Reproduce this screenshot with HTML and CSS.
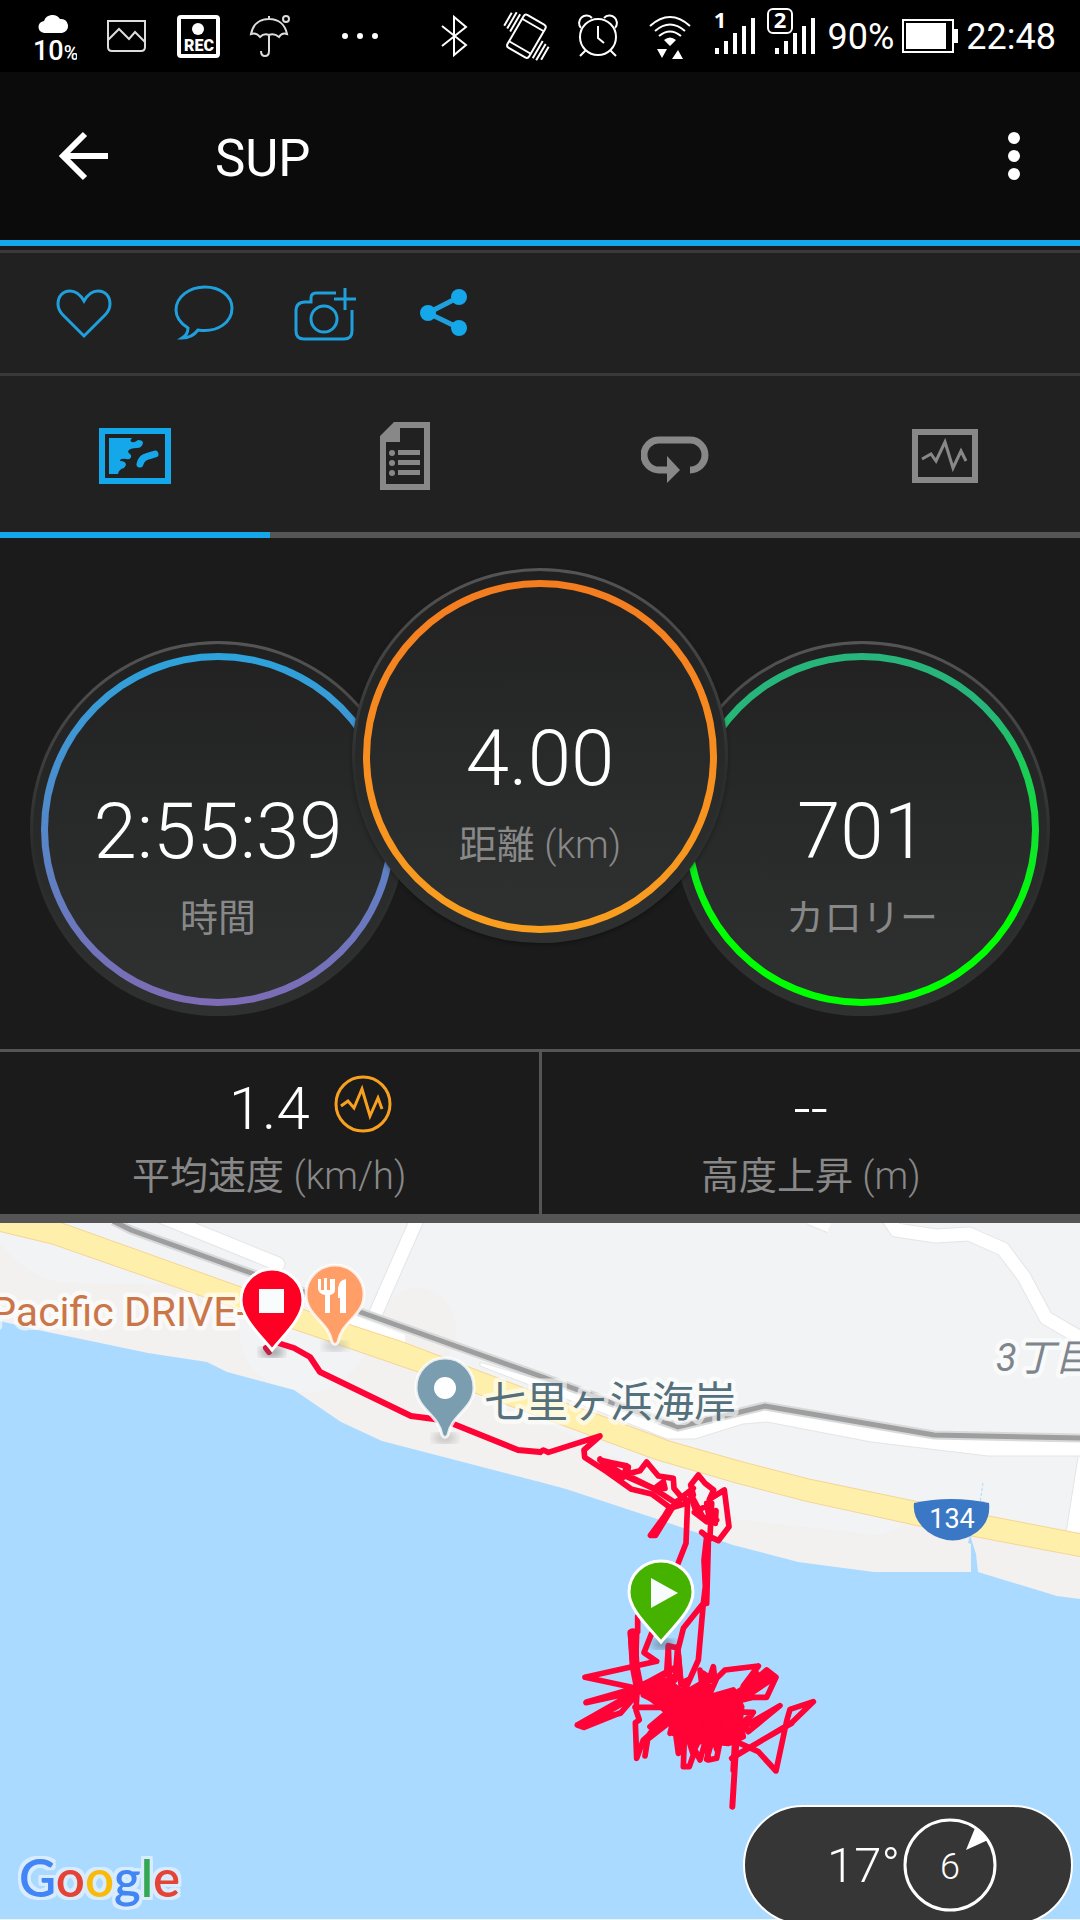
FILE: index.html
```html
<!DOCTYPE html>
<html lang="ja">
<head>
    <meta charset="UTF-8">
    <meta name="viewport" content="width=device-width, initial-scale=1.0">
    <title>SUP</title>
    <link rel="stylesheet" href="styles.css">
</head>
<body>

    <!-- Status Bar -->
    <div class="status-bar">
        <div class="status-icons">
            <svg width="44" height="72" viewBox="0 0 44 72" fill="#fff">
                <path d="M12 33a6 6 0 0 1-1-12 9 9 0 0 1 16-2 7 7 0 0 1 2 14z"/>
                <text class="rain-text" x="0" y="60">10<tspan class="rain-unit">%</tspan></text>
            </svg>
            <svg width="44" height="72" viewBox="0 0 44 72" fill="none" stroke="#ddd" stroke-width="2">
                <path d="M3 21h37v26q0 4-4 4H7q-4 0-4-4zM3 40l11-11 10 10 6-7 10 10"/>
            </svg>
            <svg width="44" height="72" viewBox="0 0 44 72">
                <rect x="2" y="17" width="39" height="39" rx="2" fill="none" stroke="#fff" stroke-width="4"/>
                <circle cx="21" cy="29" r="6" fill="#fff"/>
                <text class="rec-text" x="22" y="51">REC</text>
            </svg>
            <svg width="44" height="72" viewBox="0 0 44 72" fill="none" stroke="#ddd" stroke-width="2">
                <path d="M20 16v3M2 34C4 24 11 19 20 19s16 5 18 15q-5-2-8 3-5-4-10-2-5-2-9 2-4-5-9-3zM20 35v16q0 5-4 5t-4-5"/>
                <circle cx="37" cy="19" r="3"/>
            </svg>
            <svg width="76" height="72" viewBox="0 0 76 72" fill="#fff">
                <circle cx="24" cy="36" r="3"/>
                <circle cx="39" cy="36" r="3"/>
                <circle cx="54" cy="36" r="3"/>
            </svg>
        </div>
        <div class="status-system">
            <div class="status-icons">
                <svg width="44" height="72" viewBox="0 0 44 72" fill="none" stroke="#fff" stroke-width="2">
                    <path d="M10 26l24 19-12 10V17l12 10-24 19"/>
                </svg>
                <svg class="wide-icon" width="44" height="72" viewBox="0 0 44 72" fill="none" stroke="#fff" stroke-width="2">
                    <g transform="rotate(30 22 36)">
                        <rect x="10" y="17" width="25" height="38" rx="3"/>
                        <path d="M10 23h25M10 49h25M6 20v20M2 20v19M-2 23v15M39 32v20M43 33v19M47 34v15"/>
                    </g>
                </svg>
                <svg width="44" height="72" viewBox="0 0 44 72" fill="none" stroke="#fff" stroke-width="2">
                    <circle cx="22" cy="37" r="18"/>
                    <path d="M22 26v12l6 5M10 50l-6 6M34 50l6 6M5 28a7 7 0 1 1 11-10M39 28a7 7 0 1 0-11-10"/>
                </svg>
                <svg width="44" height="72" viewBox="0 0 44 72" fill="none" stroke="#fff" stroke-width="2">
                    <path d="M2 26q20-18 40 0M7 31q15-13 30 0M11 36q11-9 22 0"/>
                    <path d="M16 40q6-5 12 0l-6 6zM9 49h10l-5 9zM24 59h11l-5-9z" fill="#fff" stroke="none"/>
                </svg>
            </div>
            <svg width="46" height="72" viewBox="0 0 46 72" fill="#fff">
                <path d="M3 48h4v6H3zM12 41h4v13h-4zM21 33h4v21h-4zM30 26h4v28h-4zM39 18h4v36h-4z"/>
                <text class="sim-text" x="8" y="28">1</text>
            </svg>
            <svg width="54" height="72" viewBox="0 0 54 72" fill="#fff">
                <path d="M9 48h4v6H9zM18 41h4v13h-4zM27 33h4v21h-4zM36 26h4v28h-4zM45 18h4v36h-4z"/>
                <rect x="2" y="9" width="24" height="24" rx="5" fill="#000" stroke="#fff" stroke-width="2"/>
                <text class="sim-text" x="14" y="28">2</text>
            </svg>
            <span>90%</span>
            <svg width="56" height="72" viewBox="0 0 56 72">
                <path d="M1 20h50v32H1zM52 30h4v12h-4z" fill="none" stroke="#fff" stroke-width="2"/>
                <path d="M4 23h40v26H4zM52 30h4v12h-4z" fill="#fff"/>
            </svg>
            <span>22:48</span>
        </div>
    </div>

    <!-- App Bar -->
    <header class="app-bar">
        <button class="icon-btn" aria-label="戻る">
            <svg width="72" height="72" viewBox="0 0 72 72" fill="none" stroke="#fff" stroke-width="6">
                <path d="M60 36H16M37 14L15 36l22 22"/>
            </svg>
        </button>
        <h1>SUP</h1>
        <button class="icon-btn" aria-label="メニュー">
            <svg width="72" height="72" viewBox="0 0 72 72" fill="#fff">
                <circle cx="36" cy="18" r="6"/>
                <circle cx="36" cy="36" r="6"/>
                <circle cx="36" cy="54" r="6"/>
            </svg>
        </button>
    </header>

    <!-- Social Actions -->
    <div class="actions">
        <button class="icon-btn" aria-label="いいね">
            <svg width="72" height="72" viewBox="0 0 72 72" fill="none" stroke="#1f9fdc" stroke-width="3">
                <path d="M36 24C32 17 27 14 22 14c-7 0-12 5-12 13 0 4 2 8 5 11l21 21 21-21c3-3 5-7 5-11 0-8-5-13-12-13-5 0-10 3-14 10z"/>
            </svg>
        </button>
        <button class="icon-btn" aria-label="コメント">
            <svg width="72" height="72" viewBox="0 0 72 72" fill="none" stroke="#1f9fdc" stroke-width="3">
                <path d="M30 53C50 56 64 45 64 31 64 19 52 10 37 10 21 10 8 20 8 33c0 8 4 13 12 18 0 6-3 8-6 10 8 0 13-4 16-8z"/>
            </svg>
        </button>
        <button class="icon-btn" aria-label="写真を追加">
            <svg width="72" height="72" viewBox="1 0 72 72" fill="none" stroke="#1f9fdc" stroke-width="3">
                <path d="M49 16H29q-5 0-5 5v4h-6q-9 0-9 9v20q0 8 8 8h40q8 0 8-8V33M47 22h22M58 11v22"/>
                <circle cx="37" cy="42" r="13"/>
            </svg>
        </button>
        <button class="icon-btn" aria-label="共有">
            <svg width="72" height="72" viewBox="0 0 72 72" fill="#14a7ea">
                <path d="M51 20L20 36l31 15" fill="none" stroke="#1f9fdc" stroke-width="5"/>
                <circle cx="20" cy="36" r="8"/>
                <circle cx="51" cy="20" r="8"/>
                <circle cx="51" cy="51" r="8"/>
            </svg>
        </button>
    </div>

    <!-- Tabs -->
    <nav class="tabs">
        <a href="#map" class="active" aria-label="マップ">
            <svg width="72" height="56" viewBox="0 0 72 56">
                <rect x="3" y="3" width="66" height="50" fill="none" stroke="#14a7ea" stroke-width="6"/>
                <path d="M10 10h23q-3 3 0 4 2 1 6-2 5 0 5 3-1 5-6 5-7 0-9 3 0 2 3 4 1 5-5 4-6-1-6 2 6 0 6 4l-2 3q-5 1-6 6H10z" fill="#14a7ea"/>
                <path d="M56 26c-6 2-13 2-15 10" fill="none" stroke="#14a7ea" stroke-width="7" stroke-linecap="round"/>
            </svg>
        </a>
        <a href="#details" aria-label="詳細">
            <svg width="50" height="68" viewBox="0 0 50 68" fill="#888">
                <path fill-rule="evenodd" d="M14 0h36v68H0V14zM20 6v14H6v42h38V6z"/>
                <circle cx="12" cy="31" r="3"/>
                <circle cx="12" cy="41" r="3"/>
                <circle cx="12" cy="51" r="3"/>
                <path d="M18 28h22v5H18zM18 38h22v5H18zM18 48h22v5H18z"/>
            </svg>
        </a>
        <a href="#laps" aria-label="ラップ">
            <svg width="68" height="56" viewBox="0 -8 68 56" fill="none" stroke="#888" stroke-width="7">
                <path d="M27 34h-9a15 15 0 0 1 0-30h31a15 15 0 0 1 0 30"/>
                <path d="M26 20l13 14-13 13z" fill="#888" stroke="none"/>
            </svg>
        </a>
        <a href="#charts" aria-label="グラフ">
            <svg width="66" height="54" viewBox="0 0 66 54" fill="none" stroke="#888">
                <rect x="3" y="3" width="60" height="48" stroke-width="6"/>
                <path d="M10 30l9-5 5 7 9-19 8 26 8-17 5 10" stroke-width="3"/>
            </svg>
        </a>
    </nav>

    <!-- Summary Rings -->
    <section class="rings">
        <div class="ring ring-time">
            <div class="ring-inner">
                <strong>2:55:39</strong>
                <span class="label">時間</span>
            </div>
        </div>
        <div class="ring ring-distance">
            <div class="ring-inner">
                <strong>4.00</strong>
                <span class="label">距離 <span class="unit">(km)</span></span>
            </div>
        </div>
        <div class="ring ring-calories">
            <div class="ring-inner">
                <strong>701</strong>
                <span class="label">カロリー</span>
            </div>
        </div>
    </section>

    <!-- Stats -->
    <section class="stats">
        <div class="stat">
            <div class="stat-value">
                <strong>1.4</strong>
                <svg width="58" height="58" viewBox="0 0 58 58" fill="none" stroke="#f9a01f" stroke-width="3">
                    <circle cx="29" cy="29" r="27"/>
                    <path d="M7 31l7-5 6 7 8-19 8 27 8-18 4 11"/>
                </svg>
            </div>
            <span class="label">平均速度 <span class="unit">(km/h)</span></span>
        </div>
        <div class="stat">
            <div class="stat-value">
                <strong>--</strong>
            </div>
            <span class="label">高度上昇 <span class="unit">(m)</span></span>
        </div>
    </section>

    <!-- Map -->
    <section id="map" class="map">
        <svg class="map-canvas" viewBox="0 1223 1080 697" preserveAspectRatio="xMidYMin slice">
            <defs>
                <filter id="soft"><feGaussianBlur stdDeviation="4"/></filter>
            </defs>
            <rect y="1223" width="1080" height="697" fill="#f1f3f4"/>

            <!-- Beach and sea -->
            <ellipse cx="418" cy="1330" rx="38" ry="42" fill="#f2f1ef"/>
            <path fill="#f2f1ef" d="M0 1243q22 30 60 40l120 2 60 35q-6 60 60 72 40 6 66-40l64 25 130 53 80 40 100 50 140 15 50-20 150 45v60H0z"/>
            <path fill="#aadaff" d="M0 1321l38 9 110 23 59 9 20 10 67 18 47 32 41 19 158 41 26 7 88 29 79 27 65 17 76 10h97v-28l-3-1 2-8 6 19 2 18 79 24 23 3v320H0z"/>
            <path d="M983 1483l-3 20" stroke="#aadaff" stroke-dasharray="3 2"/>

            <!-- Side roads -->
            <g fill="none" stroke-linejoin="round">
                <g stroke="#e3e5e6" stroke-width="15">
                    <path d="M160 1216l118 48" stroke-linecap="round"/>
                    <path d="M419 1215l-44 100M883 1210l13 20 40 6 33-2 34 15 21 28 22 41 38 22M810 1218l20 8"/>
                    <path d="M1085 1458l-12 75"/>
                </g>
                <g stroke="#fff" stroke-width="13">
                    <path d="M160 1216l118 48" stroke-linecap="round"/>
                    <path d="M419 1215l-44 100M883 1210l13 20 40 6 33-2 34 15 21 28 22 41 38 22M810 1218l20 8"/>
                    <path d="M1085 1458l-12 75"/>
                </g>
            </g>
            <path fill="#fff" d="M345 1312l60 23v12l-65-22z"/>
            <path fill="#fff" stroke="#e3e5e6" d="M480 1362l60 18 137 48 88-20 169 30h147v18h-93l-117-14-104-20-24 2-48 15h-28l-62-25-125-48z"/>

            <!-- Route 134 -->
            <path fill="#feefaa" stroke="#f6d595" d="M-2 1220h56l8 3 179 64 64 23 98 32 137 52 65 23 64 24 74 21 66 17 110 23 70 14 93 18v23L919 1526l-114-25-69-18-82-24-114-42-122-45-122-42-89-32-155-54-54-13z"/>

            <!-- Railway -->
            <path fill="none" stroke="#d8d9da" stroke-width="9" d="M113 1221l18 9 120 43 109 39 180 64 138 51 87-21 169 29 150 3"/>
            <path fill="none" stroke="#9e9e9e" stroke-width="5" d="M113 1221l18 9 120 43 109 39 180 64 138 51 87-21 169 29 150 3"/>

            <path fill="#3a78c6" d="M914 1503q37-8 75 0 2 18-12 29-24 17-49 0-16-13-14-29z"/>
            <text class="route-no" x="952" y="1528">134</text>

            <text class="place place-shop" x="248" y="1326">Pacific DRIVE-</text>
            <text class="place place-area" x="996" y="1371">3丁目</text>

            <!-- Recorded track -->
            <g fill="none" stroke="#ff0236" stroke-width="6" stroke-linejoin="round" stroke-linecap="round">
                <path d="M266 1348l3 4M278 1343l16 5 16 9 10 15 91 44 23 3 17 4 67 27 22 2"/>
            </g>
            <svg x="540" y="1420" width="300" height="400" viewBox="0 0 900 1200" fill="none" stroke="#ff0236" stroke-width="17" stroke-linejoin="round" stroke-linecap="round">
                <path d="M0 97l10-7 15 7 155-49-48 42 2 22 66 43 75 53 60 14 57 42 48-14-8-20-27 18-65-43-80-35-80-50 85 20-3 25-42 0-40-48 30 45 40 10 10-35-60-12"/>
                <path d="M270 160l30-8 20-26 35 42 45 7 2 30 23 27 35-27M350 200l20-15 5 20-35 0-60-30"/>
                <path d="M392 264l-60 82h14l54-88M385 270l-45 75" stroke-width="18"/>
                <path d="M443 240l-5 130-26 66"/>
                <path d="M460 225l-8-30 23-30 20 25 26 20-13 28 45-28 14 110-32 42-25-12 5-100-52 27 37 28 28-33-2 38-38-20-40-75 20 60M485 337l25 20M500 250l10 60 20-10"/>
                <path d="M500 350l-8 70 4 80-6 50-60 75-15 60-30-8 3 90M490 550l-15 170-40 90M505 370l-5 180M413 685l10 110"/>
                <path d="M293 590v45l-22 2 8 98M280 640l5 100M290 640l-3 90"/>
                <path d="M278 640l6 100 12 60" stroke-width="30"/>
                <path d="M335 640l-23 58 38 26-215 48 155 33-152 43 150-33-172 98 125-33 45-52-160 92M140 846l160-46M112 915l20 7 110-44"/>
                <path d="M292 800l-4 70 10 30-12 8 4 107 20-55 50-45 45-35M315 1008l8-50 70-55M285 862h120M330 940l60-70-60 50M295 800l120-60M300 815l100-70-110 60"/>
                <path d="M385 680l-5 80 25 20 8-100 10 110 20-10-30 70M300 790l80 30-70 5 100 50-120-70 110-20-60 50"/>
                <path fill="#ff0236" d="M320 800l60-20 50 40 20-10 35-20 25 40 70-20 25 50-5 50 10 40-45 20-55-5-60 0-50-50-20-40-60-50z"/>
                <path d="M480 750l10 80 30-90 5 45-35-25 20 60 20-45 25-25 100-12-50 70-70 45M655 738l-45 60M540 850l70-40 70-60 28 22-28 60h-40l-50 12 100-80M540 845l50-15 60-70-40 75 90-60"/>
                <path d="M550 875l90 2-40 50 120-70-95 78-40-60-50 80M600 870l-20 60 55-45"/>
                <path d="M575 1015l180-107 65-63-70 23-10 35-32 150-53-58-55-25-50-5M580 1010l175-100"/>
                <path d="M590 950l-13 210M585 960l-5 90" stroke-width="18"/>
                <path d="M400 890l15 110 18-45-3 85h18l12-35-20-65 40 80 20-70 5 70 25-5 10-50 25-20-70-20-30 60-30-90-20 90-10-60-15 15 20-80M410 900l-10 40 25-30M500 1018l20-70 10 40"/>
                <path d="M350 840l60 70 40-90 20 120 40-140 10 140 60-120-30 110 50-60-80 90-90-60 70-70 80 40-150 10"/>
            </svg>

            <!-- Places -->
            <ellipse cx="335" cy="1346" rx="12" ry="5" fill="#999" opacity=".5" filter="url(#soft)"/>
            <path fill="#ff9e67" stroke="#fff" stroke-opacity=".8" stroke-width="3" d="M335 1265a29 29 0 0 1 29 30c0 21-23 27-26 47q-3 5-6 0c-3-20-26-26-26-47a29 29 0 0 1 29-30z"/>
            <path fill="#fff" d="M318 1279h3v11h3v-12h3v12h3v-11h5v11q0 4-5 5v18h-5v-18q-6-1-7-6zM346 1279v34h-6v-15h-2v-10q1-8 8-9z"/>
            <ellipse cx="445" cy="1438" rx="12" ry="5" fill="#888" opacity=".5" filter="url(#soft)"/>
            <path fill="#7a9eb0" stroke="#fff" stroke-opacity=".8" stroke-width="3" d="M445 1358a29 29 0 0 1 29 30c0 21-23 27-26 47q-3 5-6 0c-3-20-26-26-26-47a29 29 0 0 1 29-30z"/>
            <circle cx="445" cy="1388" r="11" fill="#fff"/>
            <text class="place place-beach" x="484" y="1417">七里ヶ浜海岸</text>

            <!-- Finish and start pins -->
            <ellipse cx="272" cy="1352" rx="12" ry="5" fill="#555" opacity=".6" filter="url(#soft)"/>
            <path fill="#ff0025" stroke="#fff" stroke-width="3" d="M272 1269c17 0 31 14 31 31 0 18-19 35-31 50-12-15-31-32-31-50 0-17 14-31 31-31z"/>
            <path fill="#f9fcfc" d="M259 1289h25v24h-25z"/>
            <ellipse cx="663" cy="1644" rx="12" ry="5" fill="#456" opacity=".6" filter="url(#soft)"/>
            <path fill="#46b200" stroke="#fff" stroke-width="3" d="M661 1561c18 0 32 14 32 31 0 18-20 35-32 50-12-15-32-32-32-50 0-17 14-31 32-31z"/>
            <path fill="#f9fcfc" d="M651 1578l27 15-27 15z"/>
        </svg>

        <div class="google"><span class="b">G</span><span class="r">o</span><span class="y">o</span><span class="b">g</span><span class="g">l</span><span class="r">e</span></div>

        <div class="weather">
            <span>17°</span>
            <svg width="94" height="94" viewBox="0 0 94 94">
                <circle cx="47" cy="47" r="45" fill="none" stroke="#fff" stroke-width="3"/>
                <path fill="#fff" d="M72 10l13 12-22 10z"/>
                <text class="wind-text" x="47" y="61">6</text>
            </svg>
        </div>
    </section>

</body>
</html>
```

FILE: styles.css
```css
/* Reset default styles */
* {
    margin: 0;
    padding: 0;
    box-sizing: border-box;
}

body {
    font-family: Roboto, "Noto Sans CJK JP", sans-serif;
    background-color: #1b1b1b;
    color: white;
    min-height: 100vh;
    display: flex;
    flex-direction: column;
}

svg {
    display: block;
    flex-shrink: 0;
}

strong {
    font-weight: 300;
}

/* Status bar */
.status-bar {
    height: 72px;
    background-color: #000;
    display: flex;
    justify-content: space-between;
    padding: 0 24px 0 33px;
    font-size: 36px;
    line-height: 74px;
}

.status-icons {
    display: flex;
    gap: 28px;
}

.status-system {
    display: flex;
    gap: 8px;
}

.status-system .status-icons {
    margin-right: 12px;
}

.wide-icon {
    overflow: visible;
}

.rain-text {
    font-size: 27px;
    font-weight: 500;
}

.rain-unit {
    font-size: 20px;
}

.rec-text {
    font-size: 16px;
    font-weight: 900;
    fill: white;
    text-anchor: middle;
}

.sim-text {
    font-family: "Noto Sans", sans-serif;
    font-size: 22px;
    font-weight: 700;
    text-anchor: middle;
}

/* App bar */
.app-bar {
    height: 174px;
    background-color: #0b0b0b;
    border-bottom: 6px solid #14a7ea;
    display: flex;
    align-items: center;
    padding: 0 30px 0 48px;
}

.app-bar h1 {
    flex: 1;
    font-size: 51px;
    font-weight: 400;
    margin-left: 95px;
    padding-top: 4px;
}

.icon-btn {
    background: none;
    border: none;
    cursor: pointer;
}

/* Social actions */
.actions {
    margin-top: 4px;
    height: 126px;
    background-color: #212121;
    border-top: 3px solid #393939;
    border-bottom: 3px solid #393939;
    display: flex;
    align-items: center;
    gap: 48px;
    padding: 0 48px;
}

/* Tabs */
.tabs {
    height: 162px;
    background-color: #212121;
    display: flex;
}

.tabs a {
    flex: 1;
    display: flex;
    align-items: center;
    justify-content: center;
    padding-top: 4px;
    border-bottom: 6px solid #555;
}

.tabs a.active {
    border-bottom-color: #14a7ea;
}

/* Rings */
.rings {
    display: flex;
    justify-content: center;
    padding: 30px 0 33px;
}

.ring {
    width: 376px;
    height: 375px;
    flex-shrink: 0;
    margin: 73px -27px 0;
    padding: 9px 8px 7px;
    border: 3px solid transparent;
    border-radius: 50%;
    background: linear-gradient(#202020, #2f3131) padding-box, linear-gradient(#555, #2b2c2c 55%, #2f3131) border-box;
}

.ring-inner {
    height: 100%;
    display: flex;
    flex-direction: column;
    align-items: center;
    padding-top: 126px;
    border: 7px solid transparent;
    border-radius: 50%;
}

.ring-inner strong {
    font-size: 78px;
    line-height: 92px;
}

.label {
    color: #888;
    font-size: 38px;
    line-height: 56px;
}

.unit {
    font-weight: 300;
}

.ring-inner .label {
    margin-top: 12px;
}

.ring-time .ring-inner {
    background: linear-gradient(#222, #2f3131) padding-box, linear-gradient(#2ca3dc, #7e6bb5) border-box;
}

.ring-distance {
    margin-top: 0;
    z-index: 1;
    box-shadow: 0 2px 4px rgba(0, 0, 0, 0.3);
}

.ring-distance .ring-inner {
    background: linear-gradient(#222, #2f3131) padding-box, linear-gradient(#f47c20, #f99f1f) border-box;
}

.ring-calories .ring-inner {
    background: linear-gradient(#222, #2f3131) padding-box, linear-gradient(#27b57b 15%, #00ff00 75%) border-box;
}

/* Stats */
.stats {
    display: flex;
    border-top: 3px solid #555;
    border-bottom: 9px solid #555;
}

.stat {
    flex: 1;
    height: 162px;
    padding-top: 23px;
    text-align: center;
}

.stat + .stat {
    border-left: 3px solid #555;
}

/* Keeps the number centred with the icon beside it */
.stat-value {
    display: grid;
    grid-template-columns: 1fr auto 1fr;
    gap: 24px;
    height: 68px;
}

.stat-value strong {
    grid-column: 2;
    font-size: 60px;
    line-height: 68px;
}

.stat .label {
    display: block;
    margin-top: 5px;
}

/* Map */
.map {
    flex: 1;
    min-height: 600px;
    position: relative;
    overflow: hidden;
    background-color: #aadaff;
}

.map-canvas {
    position: absolute;
    width: 100%;
    height: 100%;
}

.place {
    paint-order: stroke;
    stroke: rgba(255, 255, 255, 0.6);
    stroke-width: 9px;
    stroke-linejoin: round;
}

.place-shop {
    font-size: 41px;
    fill: #cb7648;
    text-anchor: end;
}

.place-beach {
    font-size: 42px;
    fill: #54707c;
}

.place-area {
    font-size: 38px;
    font-style: italic;
    fill: #7f858d;
}

.route-no {
    font-size: 27px;
    fill: white;
    text-anchor: middle;
}

/* One outline around the whole word, so letters do not cover each other */
.google {
    position: absolute;
    left: 19px;
    bottom: 10px;
    font-family: Lato, sans-serif;
    font-size: 51px;
    font-weight: 600;
    line-height: 64px;
    filter: drop-shadow(3px 0 0 #d8ecfd) drop-shadow(-3px 0 0 #d8ecfd) drop-shadow(0 3px 0 #d8ecfd) drop-shadow(0 -3px 0 #d8ecfd);
}

.google .b {
    color: #4285f4;
}

.google .r {
    color: #e54335;
}

.google .y {
    color: #f9bb09;
}

.google .g {
    color: #34a853;
}

.weather {
    position: absolute;
    right: 7px;
    bottom: -5px;
    height: 120px;
    display: flex;
    align-items: center;
    gap: 3px;
    padding: 0 74px 0 82px;
    border: 2px solid white;
    border-radius: 60px;
    background-color: #363636;
    font-size: 49px;
    font-weight: 300;
}

.wind-text {
    font-size: 36px;
    fill: white;
    text-anchor: middle;
}
```
